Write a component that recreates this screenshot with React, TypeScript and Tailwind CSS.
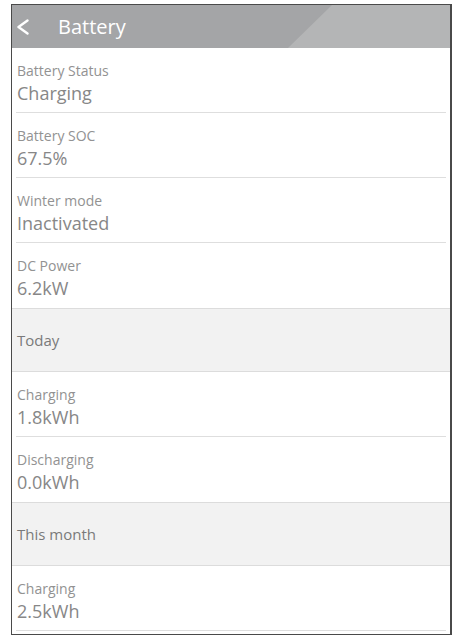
interface Item {
  kind: "item" | "section";
  label: string;
  value?: string;
  last?: boolean; // no inset divider under it (next is a section)
}

const ROWS: Item[] = [
  { kind: "item", label: "Battery Status", value: "Charging" },
  { kind: "item", label: "Battery SOC", value: "67.5%" },
  { kind: "item", label: "Winter mode", value: "Inactivated" },
  { kind: "item", label: "DC Power", value: "6.2kW", last: true },
  { kind: "section", label: "Today" },
  { kind: "item", label: "Charging", value: "1.8kWh" },
  { kind: "item", label: "Discharging", value: "0.0kWh", last: true },
  { kind: "section", label: "This month" },
  { kind: "item", label: "Charging", value: "2.5kWh" },
];

function Row({ r }: { r: Item }) {
  if (r.kind === "section") {
    return (
      <div className="flex h-[64px] items-center border-y border-[#dcdcdc] bg-[#f2f2f2] pl-[5px]">
        <span className="text-[15px] leading-[15px] text-[#7a7a7a]">{r.label}</span>
      </div>
    );
  }
  return (
    <div
      className={`mx-[4px] h-[65px] pl-px pt-[16px] ${
        r.last ? "" : "border-b border-[#dedede]"
      }`}
    >
      <div className="text-[14px] leading-[14px] text-[#929292]">{r.label}</div>
      <div className="mt-[6px] text-[18px] leading-[18px] text-[#878787]">{r.value}</div>
    </div>
  );
}

export default function App() {
  return (
    <div
      className="h-[642px] w-[460px] bg-white pl-[11px] pr-[8px] pt-[4px]"
      style={{ fontFamily: '"Open Sans", "Liberation Sans", sans-serif' }}
    >
      <div className="h-[631px] border-y border-l border-r-2 border-[#4a4a4a] bg-white">
        <header className="relative flex h-[43px] items-center overflow-hidden bg-[#a4a5a7]">
          <div className="absolute inset-0 bg-[#b4b5b6] [clip-path:polygon(320px_0,100%_0,100%_100%,276px_100%)]" />
          <svg
            className="relative ml-[5px] h-[16px] w-[12px]"
            viewBox="0 0 12 16"
            fill="none"
            stroke="white"
            strokeWidth={2.4}
            strokeLinecap="round"
            strokeLinejoin="round"
          >
            <polyline points="10.5,1.5 1.5,8 10.5,14.5" />
          </svg>
          <span className="relative ml-[29px] text-[20px] leading-[20px] text-white">Battery</span>
        </header>
        {ROWS.map((r, i) => (
          <Row key={i} r={r} />
        ))}
      </div>
    </div>
  );
}
